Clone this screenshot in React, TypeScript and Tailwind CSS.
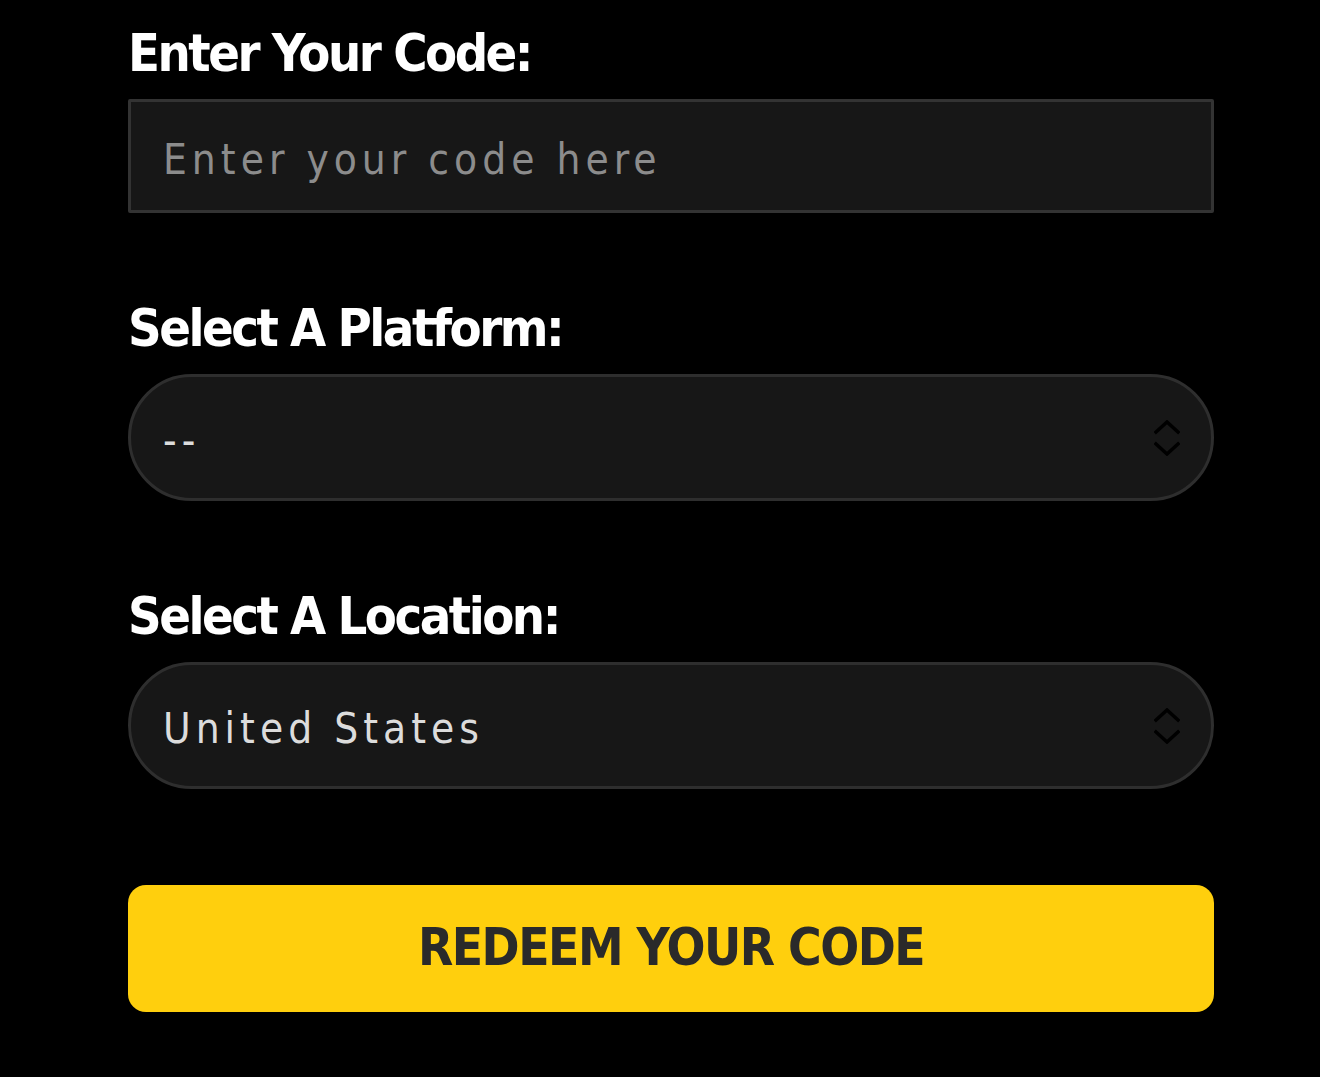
import { useState } from "react";

const font = "font-['DejaVu_Sans_Condensed','Liberation_Sans_Narrow',sans-serif]";

function Chevrons() {
  return (
    <svg
      className="pointer-events-none absolute right-[34px] top-1/2 -translate-y-1/2"
      width="26"
      height="36"
      viewBox="0 0 26 36"
      fill="none"
      stroke="#000000"
      strokeWidth="3.5"
      strokeLinecap="square"
    >
      <path d="M2 12 L13 2 L24 12" />
      <path d="M2 24 L13 34 L24 24" />
    </svg>
  );
}

export default function App() {
  const [code, setCode] = useState("");
  const [platform, setPlatform] = useState("");
  const [location, setLocation] = useState("us");

  return (
    <main className={`min-h-screen bg-black ${font}`}>
      <div className="ml-[128px] w-[1086px] pt-[27px]">
        {/* Code */}
        <label className="block text-[52px] leading-none font-bold tracking-[-2.5px] text-white mb-[20px]">
          Enter Your Code:
        </label>
        <input
          type="text"
          value={code}
          onChange={(e) => setCode(e.target.value)}
          placeholder="Enter your code here"
          className="block w-full h-[114px] bg-[#171717] border-[3px] border-[#333333] rounded-[2px] pl-[32px] pr-[32px] pt-[6px] text-[42px] tracking-[5px] text-[#dcdcdc] placeholder-[#8c8c8c] outline-none"
        />

        {/* Platform */}
        <label className="block mt-[89px] mb-[20px] text-[52px] leading-none font-bold tracking-[-2.5px] text-white">
          Select A Platform:
        </label>
        <div className="relative">
          <select
            value={platform}
            onChange={(e) => setPlatform(e.target.value)}
            className="block w-full h-[127px] appearance-none rounded-full bg-[#171717] border-[3px] border-[#2e2e2e] pl-[32px] pr-[80px] pt-[5px] text-[42px] tracking-[5px] text-[#dcdcdc] outline-none"
          >
            <option value="">--</option>
            <option value="ps">PlayStation</option>
            <option value="xbox">Xbox</option>
            <option value="pc">PC</option>
          </select>
          <Chevrons />
        </div>

        {/* Location */}
        <label className="block mt-[89px] mb-[20px] text-[52px] leading-none font-bold tracking-[-2.5px] text-white">
          Select A Location:
        </label>
        <div className="relative">
          <select
            value={location}
            onChange={(e) => setLocation(e.target.value)}
            className="block w-full h-[127px] appearance-none rounded-full bg-[#171717] border-[3px] border-[#2e2e2e] pl-[32px] pr-[80px] pt-[5px] text-[42px] tracking-[5px] text-[#dcdcdc] outline-none"
          >
            <option value="us">United States</option>
            <option value="uk">United Kingdom</option>
            <option value="ca">Canada</option>
          </select>
          <Chevrons />
        </div>

        <button className="mt-[96px] w-full h-[127px] rounded-[18px] bg-[#ffcf0d] text-[51px] font-bold tracking-[-1.5px] text-[#2a2a2a]">
          REDEEM YOUR CODE
        </button>
      </div>
    </main>
  );
}
